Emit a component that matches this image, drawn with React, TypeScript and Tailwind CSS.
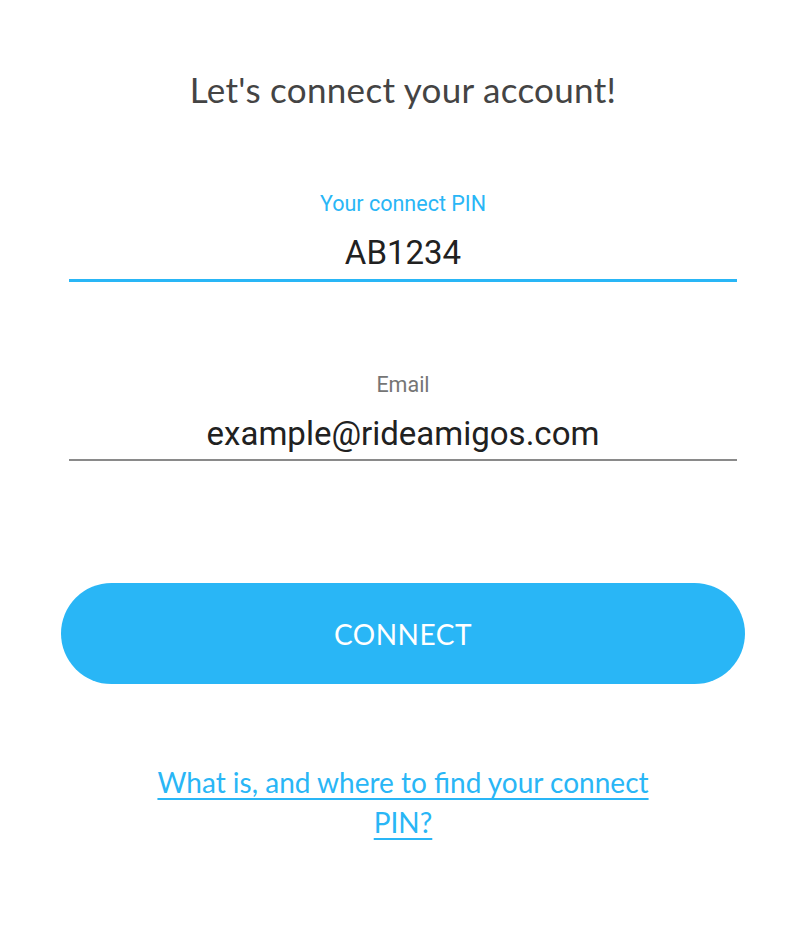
export default function App() {
  return (
    <div className="min-h-[944px] w-full bg-white font-['Roboto',sans-serif]">
      <div className="flex flex-col items-center pt-[67px]">
        <h1 className="font-['Lato',sans-serif] text-[35px] leading-[44px] font-normal text-[#444444] tracking-[0.3px]">
          Let's connect your account!
        </h1>
      </div>

      <div className="mx-[69px] mt-[81px] flex flex-col items-center">
        <label className="text-[21.5px] leading-[24px] text-[#29b6f6]">Your connect PIN</label>
        <div className="mt-[17px] w-full border-b-[3px] border-[#29b6f6] pb-[6px] text-center text-[33px] leading-[40px] text-[#212121]">
          AB1234
        </div>
      </div>

      <div className="mx-[69px] mt-[91px] flex flex-col items-center">
        <label className="text-[21.5px] leading-[24px] text-[#757575]">Email</label>
        <div className="mt-[17px] w-full border-b-2 border-[#8a8a8a] pb-[5px] text-center text-[33px] leading-[40px] text-[#212121]">
          example@rideamigos.com
        </div>
      </div>

      <div className="mx-[61px] mt-[122px]">
        <button className="flex h-[101px] w-full items-center justify-center rounded-full bg-[#29b6f6] font-['Lato',sans-serif] text-[28px] tracking-[0.5px] text-white">
          CONNECT
        </button>
      </div>

      <div className="mt-[78px] flex justify-center px-[150px]">
        <a className="text-center font-['Lato',sans-serif] text-[28px] leading-[40px] text-[#29b6f6] underline underline-offset-[5px] decoration-[1.5px]">
          What is, and where to find your connect PIN?
        </a>
      </div>
    </div>
  )
}
